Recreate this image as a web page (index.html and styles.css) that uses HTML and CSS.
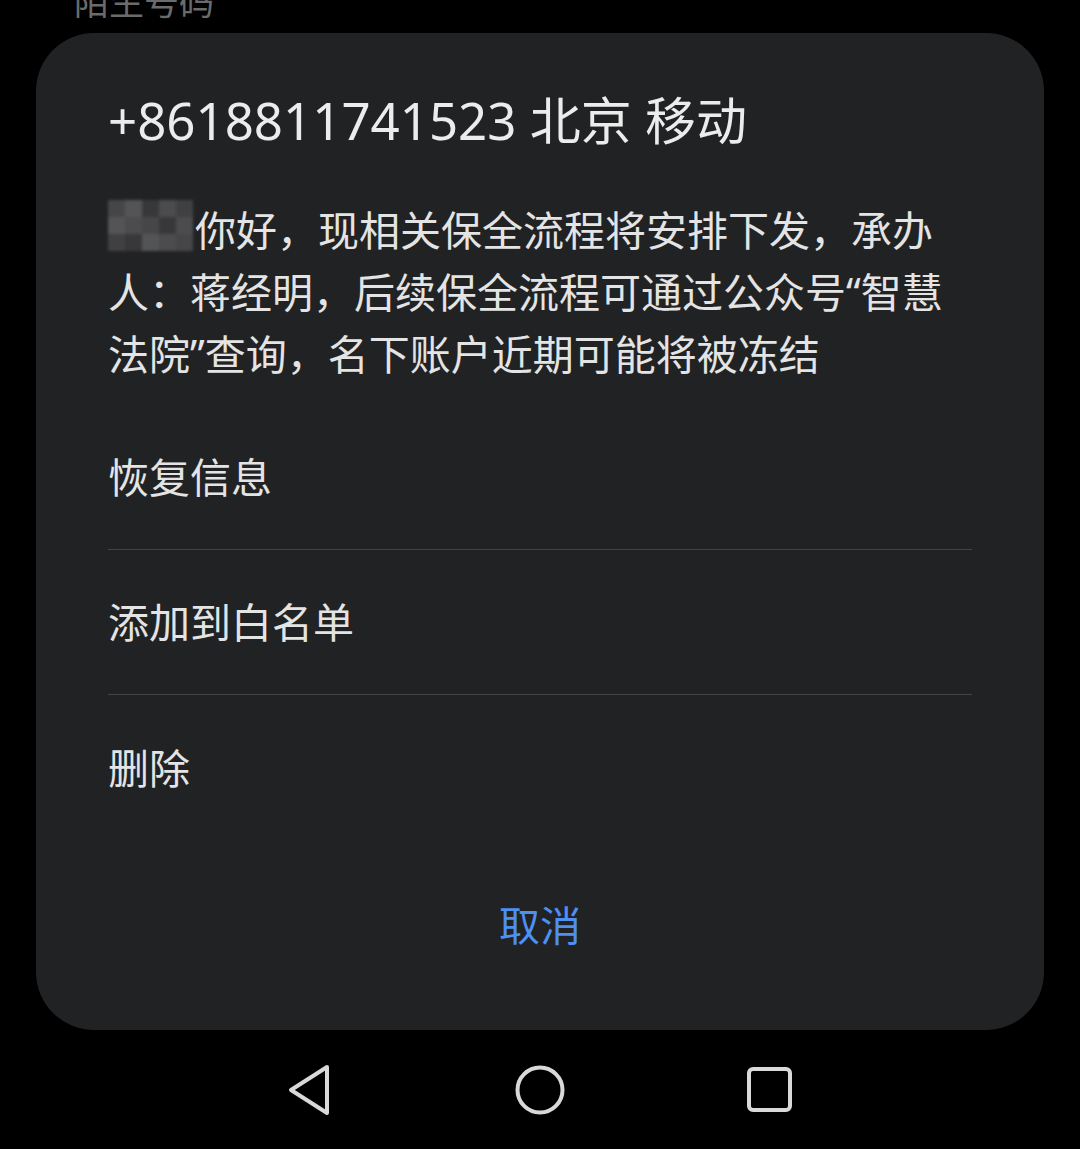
FILE: index.html
```html
<!DOCTYPE html>
<html lang="zh-CN">
<head>
    <meta charset="UTF-8">
    <title>陌生号码</title>
    <link rel="stylesheet" href="styles.css">
</head>
<body>

<div id="pageTitle">陌生号码</div>

<div id="dialog">
    <div id="number">+8618811741523 北京 移动</div>
    <div id="message"><span class="mosaic"><i class="m1"></i><i class="m2"></i><i class="m3"></i><i class="m4"></i><i class="m5"></i><i class="m2"></i><i class="m4"></i><i class="m1"></i><i class="m3"></i><i class="m4"></i><i class="m5"></i><i class="m3"></i><i class="m2"></i><i class="m4"></i><i class="m1"></i></span>你好，现相关保全流程将安排下发，承办人：蒋经明，后续保全流程可通过公众号“智慧法院”查询，名下账户近期可能将被冻结</div>

    <div id="actions">
        <div class="action">恢复信息</div>
        <div class="action">添加到白名单</div>
        <div class="action">删除</div>
    </div>

    <div id="cancel">取消</div>
</div>

<div id="navBar">
    <div class="navItem">
        <svg width="46" height="52" viewBox="0 0 46 52">
            <path d="M40 3 L4 26 L40 49 Z" fill="none" stroke="#d9d9d9" stroke-width="4" stroke-linejoin="round"/>
        </svg>
    </div>
    <div class="navItem">
        <svg width="52" height="52" viewBox="0 0 52 52">
            <circle cx="26" cy="26" r="22.5" fill="none" stroke="#d9d9d9" stroke-width="4"/>
        </svg>
    </div>
    <div class="navItem">
        <svg width="48" height="48" viewBox="0 0 48 48">
            <rect x="3" y="3" width="41" height="41" rx="4" fill="none" stroke="#d9d9d9" stroke-width="4"/>
        </svg>
    </div>
</div>

</body>
</html>
```

FILE: styles.css
```css
html, body {
    margin: 0;
    padding: 0;
    overflow: hidden;
    height: 100%;
    background-color: #000;
    font-family: "Noto Sans", "Noto Sans CJK SC", sans-serif;
}
#pageTitle {
    height: 35px;
    margin-top: -16px;
    margin-left: 74px;
    font-size: 35px;
    line-height: 35px;
    color: #6b6b6b;
}
#dialog {
    margin: 14px 36px 0;
    height: 997px;
    box-sizing: border-box;
    padding: 57px 72px 0;
    background-color: #212224;
    border-radius: 58px;
}
#number {
    font-size: 51px;
    line-height: 60px;
    color: #ececec;
}
#message {
    margin-top: 49px;
    font-size: 41px;
    line-height: 62px;
    color: #e4e4e4;
}
.mosaic {
    display: inline-grid;
    grid-template-columns: repeat(5, 17px);
    grid-template-rows: repeat(3, 17px);
    vertical-align: top;
    margin-top: 1px;
    margin-right: 2px;
    filter: blur(1.5px);
    opacity: 0.9;
}
.mosaic i {
    display: block;
}
.m1 { background-color: #4b4b4d; }
.m2 { background-color: #5a5a5c; }
.m3 { background-color: #3b3b3d; }
.m4 { background-color: #515153; }
.m5 { background-color: #444446; }
#actions {
    margin-top: 20px;
}
.action {
    height: 145px;
    box-sizing: border-box;
    padding-bottom: 4px;
    display: flex;
    align-items: center;
    font-size: 41px;
    color: #e4e4e4;
    border-bottom: 1px solid #434446;
}
.action:last-child {
    border-bottom: none;
}
#cancel {
    height: 165px;
    display: flex;
    align-items: center;
    justify-content: center;
    font-size: 41px;
    color: #4e8ff2;
}
#navBar {
    height: 119px;
    display: flex;
    justify-content: center;
    align-items: center;
}
.navItem {
    width: 230px;
    display: flex;
    justify-content: center;
    align-items: center;
}
```
